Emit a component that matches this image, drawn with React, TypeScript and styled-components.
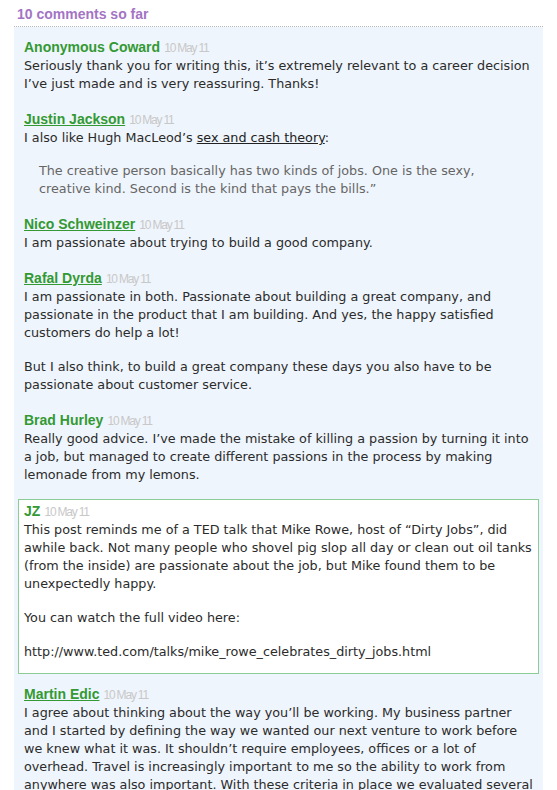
import React from 'react'
import styled, { createGlobalStyle } from 'styled-components'

const GlobalStyle = createGlobalStyle`
  body {
    margin: 0;
    background: #ffffff;
    font-family: "DejaVu Sans", Verdana, sans-serif;
    overflow: hidden;
  }
`

const Page = styled.div`
  padding: 6px 14px 0 14px;
  width: 529px;
`

const Heading = styled.h3`
  margin: 0;
  padding: 0 0 4px 3px;
  font-family: "Liberation Sans", Arial, sans-serif;
  font-size: 14px;
  font-weight: bold;
  color: #a374c4;
  line-height: 16px;
  border-bottom: 1px dotted #b8b8b8;
`

const List = styled.ol`
  list-style: none;
  margin: 0;
  padding: 11px 0 0 0;
  background: #eff5fc;
`

const Item = styled.li<{ $highlight?: boolean }>`
  margin: ${(p) => (p.$highlight ? '-2px 4px 11px 4px' : '0 0 17px 0')};
  padding: ${(p) => (p.$highlight ? '2px 4px 12px 5px' : '0 6px 0 10px')};
  background: ${(p) => (p.$highlight ? '#ffffff' : 'transparent')};
  border: ${(p) => (p.$highlight ? '1px solid #8ccc96' : 'none')};
  color: #2b2b2b;
  font-size: 12.75px;
  line-height: 18px;
`

const Meta = styled.div`
  line-height: 18px;
`

const Author = styled.a.attrs({ href: '#' })<{ $underline?: boolean }>`
  font-family: "Liberation Sans", Arial, sans-serif;
  font-weight: bold;
  font-size: 14px;
  color: #339933;
  text-decoration: ${(p) => (p.$underline ? 'underline' : 'none')};
`

const DateText = styled.span`
  font-family: "Liberation Sans", Arial, sans-serif;
  font-size: 12px;
  letter-spacing: -1.2px;
  color: #c8c8c8;
`

const Para = styled.p`
  margin: 0 0 16px 0;
  &:last-child {
    margin-bottom: 0;
  }
`

const TextLink = styled.a`
  color: #222222;
  text-decoration: underline;
`

const Quote = styled.blockquote`
  margin: 15px 40px 0 15px;
  color: #666666;
`

type Comment = {
  author: string
  linked?: boolean
  highlight?: boolean
  date: string
  body: React.ReactNode[]
}

const comments: Comment[] = [
  {
    author: 'Anonymous Coward',
    date: '10 May 11',
    body: [
      'Seriously thank you for writing this, it’s extremely relevant to a career decision I’ve just made and is very reassuring. Thanks!',
    ],
  },
  {
    author: 'Justin Jackson',
    linked: true,
    date: '10 May 11',
    body: [
      <>
        I also like Hugh MacLeod’s <TextLink href="#">sex and cash theory</TextLink>:
      </>,
      <Quote>
        The creative person basically has two kinds of jobs. One is the sexy, creative kind. Second is the kind that
        pays the bills.”
      </Quote>,
    ],
  },
  {
    author: 'Nico Schweinzer',
    linked: true,
    date: '10 May 11',
    body: ['I am passionate about trying to build a good company.'],
  },
  {
    author: 'Rafal Dyrda',
    linked: true,
    date: '10 May 11',
    body: [
      'I am passionate in both. Passionate about building a great company, and passionate in the product that I am building. And yes, the happy satisfied customers do help a lot!',
      'But I also think, to build a great company these days you also have to be passionate about customer service.',
    ],
  },
  {
    author: 'Brad Hurley',
    date: '10 May 11',
    body: [
      'Really good advice. I’ve made the mistake of killing a passion by turning it into a job, but managed to create different passions in the process by making lemonade from my lemons.',
    ],
  },
  {
    author: 'JZ',
    highlight: true,
    date: '10 May 11',
    body: [
      'This post reminds me of a TED talk that Mike Rowe, host of “Dirty Jobs”, did awhile back. Not many people who shovel pig slop all day or clean out oil tanks (from the inside) are passionate about the job, but Mike found them to be unexpectedly happy.',
      'You can watch the full video here:',
      'http://www.ted.com/talks/mike_rowe_celebrates_dirty_jobs.html',
    ],
  },
  {
    author: 'Martin Edic',
    linked: true,
    date: '10 May 11',
    body: [
      'I agree about thinking about the way you’ll be working. My business partner and I started by defining the way we wanted our next venture to work before we knew what it was. It shouldn’t require employees, offices or a lot of overhead. Travel is increasingly important to me so the ability to work from anywhere was also important. With these criteria in place we evaluated several opportunities and chose the one that fit best.',
    ],
  },
]

export default function App(): JSX.Element {
  return (
    <>
      <GlobalStyle />
      <Page>
        <Heading>10 comments so far</Heading>
        <List>
          {comments.map((c) => (
            <Item key={c.author} $highlight={c.highlight}>
              <Meta>
                <Author $underline={c.linked}>{c.author}</Author> <DateText>{c.date}</DateText>
              </Meta>
              {c.body.map((b, i) =>
                typeof b === 'string' ? (
                  <Para key={i}>{b}</Para>
                ) : (
                  <React.Fragment key={i}>{b}</React.Fragment>
                )
              )}
            </Item>
          ))}
        </List>
      </Page>
    </>
  )
}
